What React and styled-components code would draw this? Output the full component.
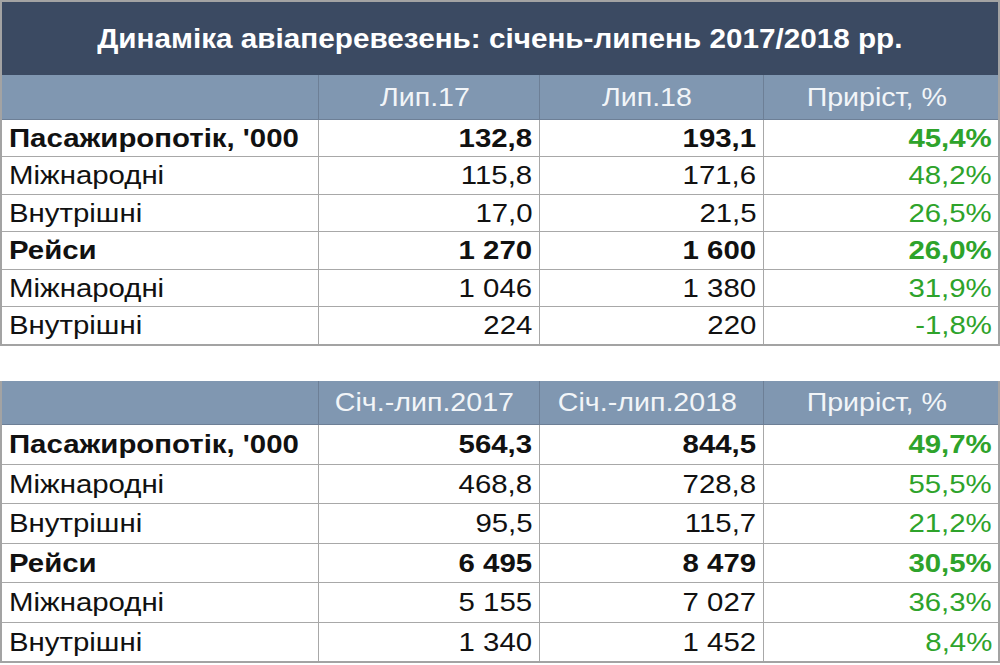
import React from 'react';
import styled, { createGlobalStyle } from 'styled-components';

const GlobalStyle = createGlobalStyle`
	html, body {
		margin: 0;
		padding: 0;
		background: #fff;
	}
	body {
		font-family: "Liberation Sans", Arial, sans-serif;
	}
`;

const Page = styled.div`
	width: 1000px;
	height: 665px;
	overflow: hidden;
	display: flex;
	flex-direction: column;
`;

const Title = styled.div`
	height: 75px;
	flex-shrink: 0;
	box-sizing: border-box;
	background-color: #3b4a62;
	border: 2px solid #a3a3a3;
	border-bottom: none;
	color: #fff;
	font-weight: bold;
	font-size: 28px;
	display: flex;
	align-items: center;
	justify-content: center;
	padding-top: 1px;
`;

// the source picture is a little wider than Arial, so text is stretched
const Stretch = styled.span`
	display: inline-block;
	transform: scaleX(${({ x }) => x});
	transform-origin: ${({ origin }) => origin || 'center'};
`;

const Table = styled.table`
	width: 1000px;
	flex-shrink: 0;
	border-collapse: collapse;
	table-layout: fixed;
	margin-top: ${({ gap }) => gap || 0}px;
	border: 2px solid #a3a3a3;
	border-top: none;
`;

const HeadCell = styled.th`
	height: ${({ h }) => h}px;
	padding: 0 8px 0 0;
	background-color: #8097b1;
	color: #f2f5f8;
	font-weight: normal;
	font-size: 26px;
	line-height: 1;
	text-align: center;
	border: 1px solid #6d7f96;
	border-top: none;
	white-space: nowrap;
`;

const Cell = styled.td`
	height: ${({ h }) => h}px;
	padding: 0 6px 0 7px;
	font-size: 26px;
	font-weight: ${({ bold }) => (bold ? 'bold' : 'normal')};
	color: ${({ green }) => (green ? '#2ea32b' : '#111')};
	text-align: ${({ label }) => (label ? 'left' : 'right')};
	border: 1px solid #a8a8a8;
	white-space: nowrap;
	line-height: 1;
`;

const top = {
	heads: ['Лип.17', 'Лип.18', 'Приріст, %'],
	rows: [
		['Пасажиропотік, \'000', '132,8', '193,1', '45,4%', true],
		['Міжнародні', '115,8', '171,6', '48,2%'],
		['Внутрішні', '17,0', '21,5', '26,5%'],
		['Рейси', '1 270', '1 600', '26,0%', true],
		['Міжнародні', '1 046', '1 380', '31,9%'],
		['Внутрішні', '224', '220', '-1,8%'],
	],
};

const bottom = {
	heads: ['Січ.-лип.2017', 'Січ.-лип.2018', 'Приріст, %'],
	rows: [
		['Пасажиропотік, \'000', '564,3', '844,5', '49,7%', true],
		['Міжнародні', '468,8', '728,8', '55,5%'],
		['Внутрішні', '95,5', '115,7', '21,2%'],
		['Рейси', '6 495', '8 479', '30,5%', true],
		['Міжнародні', '5 155', '7 027', '36,3%'],
		['Внутрішні', '1 340', '1 452', '8,4%'],
	],
};

const DataTable = ({ data, headHeight, rowHeight, gap }) => (
	<Table gap={gap}>
		<colgroup>
			<col style={{ width: 317 }} />
			<col style={{ width: 221 }} />
			<col style={{ width: 224 }} />
			<col />
		</colgroup>
		<thead>
			<tr>
				<HeadCell h={headHeight} />
				{data.heads.map((h) => (
					<HeadCell key={h} h={headHeight}>
						<Stretch x={1.1}>{h}</Stretch>
					</HeadCell>
				))}
			</tr>
		</thead>
		<tbody>
			{data.rows.map(([label, a, b, pct, bold], i) => (
				<tr key={i}>
					<Cell h={rowHeight} label bold={bold}>
						<Stretch x={1.13} origin="left">{label}</Stretch>
					</Cell>
					{[a, b].map((v, j) => (
						<Cell key={j} h={rowHeight} bold={bold}>
							<Stretch x={1.13} origin="right">{v}</Stretch>
						</Cell>
					))}
					<Cell h={rowHeight} bold={bold} green>
						<Stretch x={1.13} origin="right">{pct}</Stretch>
					</Cell>
				</tr>
			))}
		</tbody>
	</Table>
);

export default function App() {
	return (
		<Page>
			<GlobalStyle />
			<Title>
				<Stretch x={1.06}>Динаміка авіаперевезень: січень-липень 2017/2018 рр.</Stretch>
			</Title>
			<DataTable data={top} headHeight={43.5} rowHeight={36.5} />
			<DataTable data={bottom} headHeight={43.5} rowHeight={38.5} gap={35} />
		</Page>
	);
}
